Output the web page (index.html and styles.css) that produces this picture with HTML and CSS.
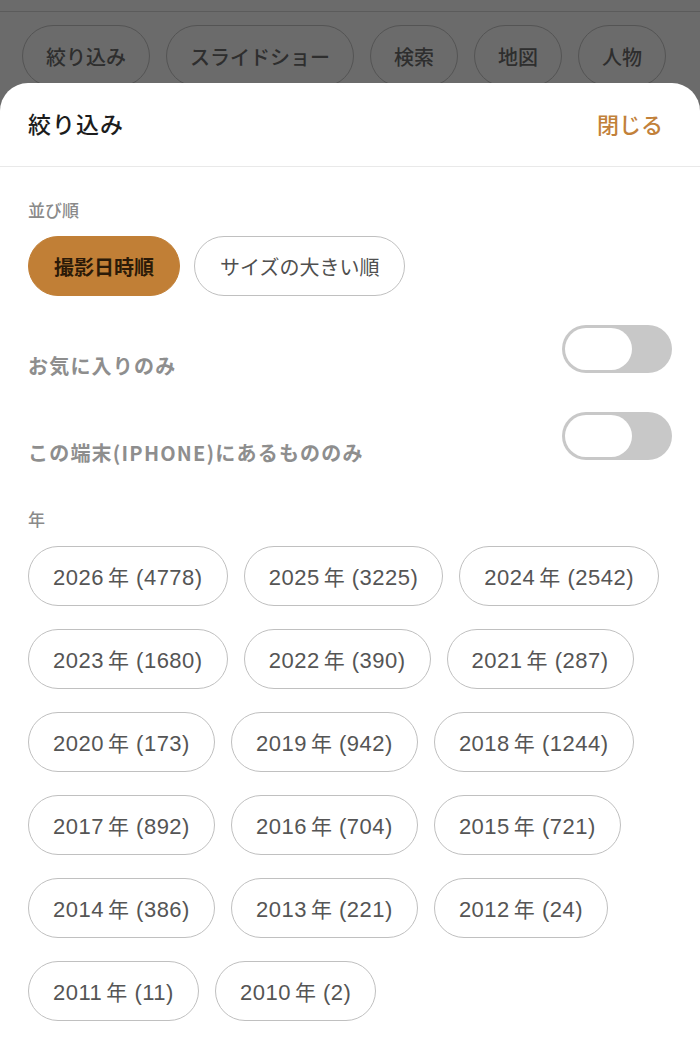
FILE: index.html
```html
<!DOCTYPE html>
<html lang="ja">
<head>
  <meta charset="UTF-8" />
  <meta name="viewport" content="width=device-width, initial-scale=1.0"/>
  <title>絞り込み</title>
  <link rel="stylesheet" href="styles.css">
</head>
<body>
  <div class="topbar"></div>

  <!-- page behind the sheet -->
  <div class="bg-tabs">
    <span class="bg-tab">絞り込み</span>
    <span class="bg-tab">スライドショー</span>
    <span class="bg-tab">検索</span>
    <span class="bg-tab">地図</span>
    <span class="bg-tab">人物</span>
  </div>

  <div class="sheet">
    <div class="sheet-header">
      <h1>絞り込み</h1>
      <button class="close-btn">閉じる</button>
    </div>

    <div class="sheet-body">
      <div class="label">並び順</div>
      <div class="chips sort-chips">
        <button class="chip active">撮影日時順</button>
        <button class="chip">サイズの大きい順</button>
      </div>

      <div class="toggle-row first">
        <span class="toggle-label">お気に入りのみ</span>
        <span class="toggle"><span class="knob"></span></span>
      </div>
      <div class="toggle-row">
        <span class="toggle-label">この端末(IPHONE)にあるもののみ</span>
        <span class="toggle"><span class="knob"></span></span>
      </div>

      <div class="label year-label">年</div>
      <div class="chips year-chips">
        <button class="chip year">2026<span class="unit">年</span> (4778)</button>
        <button class="chip year">2025<span class="unit">年</span> (3225)</button>
        <button class="chip year">2024<span class="unit">年</span> (2542)</button>
        <button class="chip year">2023<span class="unit">年</span> (1680)</button>
        <button class="chip year">2022<span class="unit">年</span> (390)</button>
        <button class="chip year">2021<span class="unit">年</span> (287)</button>
        <button class="chip year">2020<span class="unit">年</span> (173)</button>
        <button class="chip year">2019<span class="unit">年</span> (942)</button>
        <button class="chip year">2018<span class="unit">年</span> (1244)</button>
        <button class="chip year">2017<span class="unit">年</span> (892)</button>
        <button class="chip year">2016<span class="unit">年</span> (704)</button>
        <button class="chip year">2015<span class="unit">年</span> (721)</button>
        <button class="chip year">2014<span class="unit">年</span> (386)</button>
        <button class="chip year">2013<span class="unit">年</span> (221)</button>
        <button class="chip year">2012<span class="unit">年</span> (24)</button>
        <button class="chip year">2011<span class="unit">年</span> (11)</button>
        <button class="chip year">2010<span class="unit">年</span> (2)</button>
      </div>
    </div>
  </div>
</body>
</html>
```

FILE: styles.css
```css
body {
  margin: 0;
  font-family: "Noto Sans CJK JP", "Noto Sans", sans-serif;
  background: #6b6b6b;
  overflow: hidden;
}

.topbar {
  height: 11px;
  border-bottom: 1px solid #5b5b5b;
}

.bg-tabs {
  display: flex;
  gap: 16px;
  padding: 13px 22px 0;
  height: 58px;
  overflow: hidden;
}

.bg-tab {
  flex: none;
  height: 60px;
  padding: 0 23px;
  border: 1.5px solid #545454;
  border-radius: 31px;
  display: flex;
  align-items: center;
  font-size: 20px;
  font-weight: 500;
  color: #2e2e2e;
}

.sheet {
  background: #fff;
  border-radius: 28px 28px 0 0;
  height: 962px;
}

.sheet-header {
  height: 84px;
  box-sizing: border-box;
  padding: 0 37px 4px 28px;
  display: flex;
  align-items: center;
  justify-content: space-between;
  border-bottom: 1px solid #e9e9e9;
}

.sheet-header h1 {
  margin: 0;
  font-size: 23px;
  font-weight: 500;
  color: #1c1c1c;
  letter-spacing: 1px;
}

.close-btn {
  border: none;
  background: none;
  padding: 0;
  font-family: inherit;
  font-size: 22px;
  font-weight: 500;
  color: #c2813a;
}

.sheet-body {
  padding: 33px 28px 0;
}

.label {
  font-size: 17px;
  line-height: 20px;
  font-weight: 500;
  color: #8a8a8a;
}

.chips {
  display: flex;
  flex-wrap: wrap;
  gap: 23px 16px;
  margin-top: 16px;
}

.chip {
  height: 60px;
  padding: 0 23px;
  border: 1.5px solid #c0c0c0;
  border-radius: 30px;
  background: #fff;
  font-family: inherit;
  font-size: 20px;
  color: #4f4f4f;
}

.chip.active {
  background: #c17f36;
  border-color: #c17f36;
  color: #2b1a08;
  font-weight: 600;
}

.sort-chips {
  gap: 14px;
}

.sort-chips .chip {
  padding: 0 25px;
}

.year-label {
  margin-top: 49px;
}

.year-chips {
  margin-top: 17px;
}

.chip.year {
  padding: 0 24px;
  font-family: "Liberation Sans", "Noto Sans CJK JP", sans-serif;
  font-size: 22px;
  letter-spacing: 0.5px;
  color: #555;
}

.unit {
  margin-left: 4px;
  font-family: "Noto Sans CJK JP", sans-serif;
  font-size: 21px;
}

.toggle-row {
  display: flex;
  justify-content: space-between;
  align-items: flex-end;
  margin-top: 39px;
}

.toggle-row.first {
  margin-top: 29px;
}

.toggle-label {
  font-size: 20px;
  font-weight: 600;
  color: #8e8e8e;
  letter-spacing: 1.2px;
  line-height: 14px;
}

.toggle {
  width: 110px;
  height: 48px;
  border-radius: 24px;
  background: #c8c8c8;
  padding: 3px;
  box-sizing: border-box;
  display: flex;
}

.knob {
  width: 67px;
  height: 42px;
  border-radius: 21px;
  background: #fff;
}
```
